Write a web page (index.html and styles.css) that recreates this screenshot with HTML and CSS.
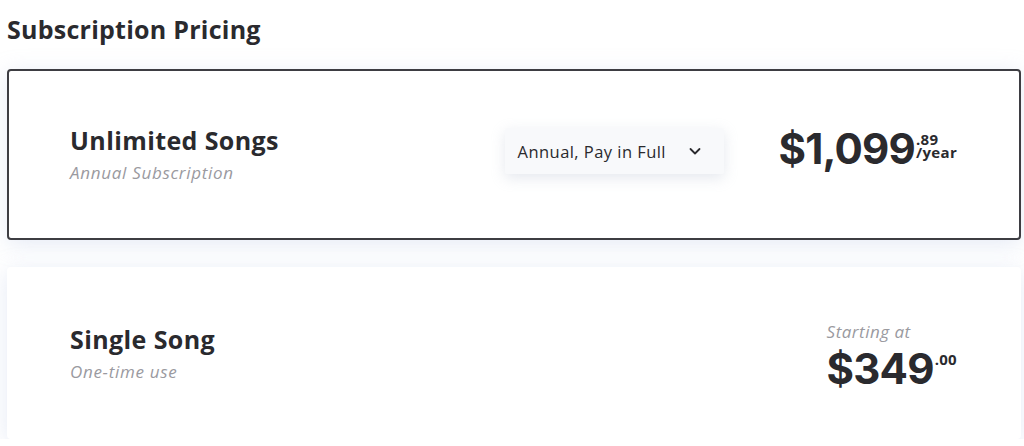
FILE: index.html
```html
<!DOCTYPE html>
<html lang="en">
<head>
    <meta charset="UTF-8">
    <meta name="viewport" content="width=device-width, initial-scale=1.0">
    <title>Subscription Pricing</title>
    <link rel="stylesheet" href="styles.css">
</head>
<body>
    <div class="pricing">
        <h2 class="pricing-title">Subscription Pricing</h2>

        <div class="plan plan-selected">
            <div class="plan-info">
                <div class="plan-name">Unlimited Songs</div>
                <div class="plan-note">Annual Subscription</div>
            </div>
            <div class="plan-side">
                <button class="term-select">
                    <span>Annual, Pay in Full</span>
                    <svg class="chevron" width="14" height="14" viewBox="0 0 14 14">
                        <path d="M2.5 5 L7 9.5 L11.5 5" fill="none" stroke="#2a2a2e" stroke-width="1.8" stroke-linecap="round" stroke-linejoin="round"/>
                    </svg>
                </button>
                <div class="price">
                    <span class="price-main">$1,099</span>
                    <span class="price-extra">
                        <span class="price-cents">.89</span>
                        <span class="price-period">/year</span>
                    </span>
                </div>
            </div>
        </div>

        <div class="plan">
            <div class="plan-info">
                <div class="plan-name">Single Song</div>
                <div class="plan-note">One-time use</div>
            </div>
            <div class="plan-side">
                <div class="price-block">
                    <div class="price-label">Starting at</div>
                    <div class="price">
                        <span class="price-main">$349</span>
                        <span class="price-extra">
                            <span class="price-cents">.00</span>
                        </span>
                    </div>
                </div>
            </div>
        </div>
    </div>
</body>
</html>
```

FILE: styles.css
```css
body {
    margin: 0;
    background: #fff;
    font-family: "Open Sans", "Liberation Sans", sans-serif;
    color: #2a2a2e;
    overflow: hidden;
}
.pricing {
    padding: 0 3px 0 7px;
    display: flex;
    flex-direction: column;
    gap: 27px;
}
.pricing-title {
    margin: 0 0 -2px;
    padding-top: 14px;
    font-size: 25px;
    font-weight: 700;
    line-height: 30px;
    letter-spacing: 0.25px;
}
.plan {
    height: 172px;
    box-sizing: border-box;
    background: #fff;
    border-radius: 4px;
    box-shadow: 0 4px 22px rgba(180, 195, 225, 0.35);
    padding: 0 64px 0 63px;
    display: flex;
    align-items: center;
    justify-content: space-between;
}
.plan-selected {
    height: 171px;
    border: 2px solid #3d3d42;
    padding: 0 62px 0 61px;
}
.plan-name {
    font-size: 25px;
    font-weight: 700;
    line-height: 30px;
    letter-spacing: 0.4px;
}
.plan-note {
    margin-top: 6px;
    font-size: 17px;
    line-height: 23px;
    font-style: italic;
    letter-spacing: 0.7px;
    color: #9a9a9f;
}
.plan-side {
    display: flex;
    align-items: center;
    gap: 55px;
}
.term-select {
    width: 219px;
    height: 46px;
    margin-bottom: 7px;
    padding: 0 22px 0 13px;
    display: flex;
    align-items: center;
    justify-content: space-between;
    background: #f8f9fb;
    border: none;
    border-radius: 2px;
    box-shadow: 0 4px 14px rgba(170, 180, 200, 0.3);
    font-family: inherit;
    font-size: 16.5px;
    letter-spacing: 0.45px;
    color: #2a2a2e;
    cursor: pointer;
}
.chevron {
    display: block;
}
.price {
    display: flex;
    align-items: flex-start;
    margin-bottom: 12px;
}
.price-main {
    font-family: Inter, "Open Sans", sans-serif;
    font-size: 42px;
    font-weight: 700;
    line-height: 44px;
    letter-spacing: -0.8px;
}
.price-extra {
    display: flex;
    flex-direction: column;
    margin-top: 6px;
    margin-left: 1px;
    font-weight: 700;
    font-size: 15px;
    line-height: 13px;
    letter-spacing: 0.3px;
}
.price-label {
    font-size: 17px;
    line-height: 22px;
    font-style: italic;
    letter-spacing: 0.5px;
    color: #9a9a9f;
    margin-bottom: 4px;
}
.price-block {
    margin-top: 5px;
}
.price-block .price {
    margin-bottom: 0;
}
```
